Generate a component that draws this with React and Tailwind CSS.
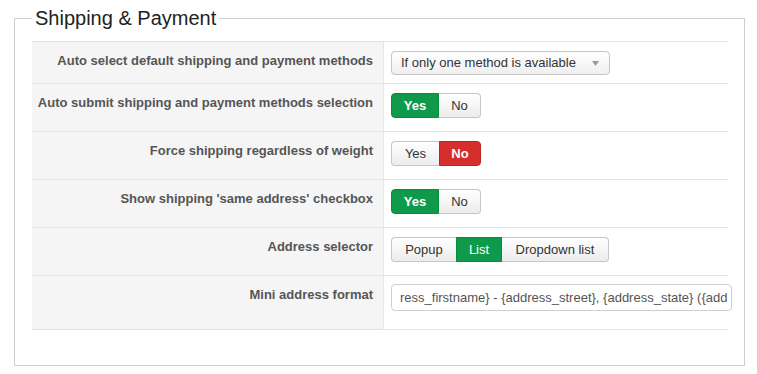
import React from 'react';

const rows = [
  { label: 'Auto select default shipping and payment methods', type: 'select', h: 'h-[42px]' },
  { label: 'Auto submit shipping and payment methods selection', type: 'toggle', active: 'yes', h: 'h-[48px]' },
  { label: 'Force shipping regardless of weight', type: 'toggle', active: 'no', h: 'h-[48px]' },
  { label: "Show shipping 'same address' checkbox", type: 'toggle', active: 'yes', h: 'h-[48px]' },
  { label: 'Address selector', type: 'selector', h: 'h-[48px]' },
  { label: 'Mini address format', type: 'input', h: 'h-[54px]' },
];

const base = 'flex items-center justify-center h-[25px] text-[13px] border';
const off = 'bg-gradient-to-b from-white to-[#ececec] border-[#c6c6c6] text-[#333]';
const green = 'bg-[#0f9a4b] border-[#0d8a42] text-white';
const red = 'bg-[#d62d2d] border-[#bf2424] text-white';

const Toggle = ({ active }) => (
  <div className="flex">
    <span
      className={`${base} w-[48px] rounded-l-[4px] ${active === 'yes' ? `${green} font-bold` : `${off} border-r-0`}`}
    >
      Yes
    </span>
    <span
      className={`${base} w-[42px] rounded-r-[4px] ${active === 'no' ? `${red} font-bold` : `${off} border-l-0`}`}
    >
      No
    </span>
  </div>
);

const Selector = () => (
  <div className="flex">
    <span className={`${base} w-[65px] rounded-l-[4px] border-r-0 ${off}`}>Popup</span>
    <span className={`${base} w-[46px] ${green}`}>List</span>
    <span className={`${base} w-[107px] rounded-r-[4px] border-l-0 ${off}`}>Dropdown list</span>
  </div>
);

const Select = () => (
  <div className="flex items-center justify-between w-[219px] h-[24px] pl-[9px] pr-[10px] border border-[#c6c6c6] rounded-[4px] bg-gradient-to-b from-white to-[#efefef] text-[13px] text-[#333]">
    <span>If only one method is available</span>
    <svg width="7" height="5" viewBox="0 0 7 5">
      <path d="M0 0h7L3.5 5z" fill="#9a9a9a" />
    </svg>
  </div>
);

// the field is scrolled, so only the visible part of the format is shown
const AddressInput = () => (
  <div className="w-[341px] h-[27px] flex items-center pl-[8px] border border-[#cfcfcf] rounded-[4px] bg-white text-[13px] text-[#555] whitespace-nowrap">
    ress_firstname} - {'{address_street}'}, {'{address_state}'} ({'{add'}
  </div>
);

const Control = ({ row }) => {
  if (row.type === 'select') return <Select />;
  if (row.type === 'toggle') return <Toggle active={row.active} />;
  if (row.type === 'selector') return <Selector />;
  return <AddressInput />;
};

export default function App() {
  return (
    <div className="w-[757px] h-[374px] bg-white font-['Liberation_Sans',Arial,sans-serif]">
      <fieldset className="ml-[14px] mt-[6px] w-[731px] min-w-0 border border-[#cfcfcf] pl-[17px] pr-[16px] pt-[11px] pb-[35px]">
        <legend className="px-[3px] text-[20px] leading-[24px] text-[#222]">Shipping &amp; Payment</legend>
        <div className="border-t border-[#e2e2e2]">
          {rows.map((row) => (
            <div key={row.label} className={`flex border-b border-[#e2e2e2] ${row.h}`}>
              <div className="w-[352px] shrink-0 bg-[#f5f5f5] border-r border-[#e6e6e6] pr-[10px] pt-[10px] text-right text-[13px] leading-[18px] font-bold text-[#555]">
                {row.label}
              </div>
              <div className={`pl-[7px] min-w-0 ${row.type === 'input' ? 'pt-[8px]' : 'pt-[9px]'}`}>
                <Control row={row} />
              </div>
            </div>
          ))}
        </div>
      </fieldset>
    </div>
  );
}
